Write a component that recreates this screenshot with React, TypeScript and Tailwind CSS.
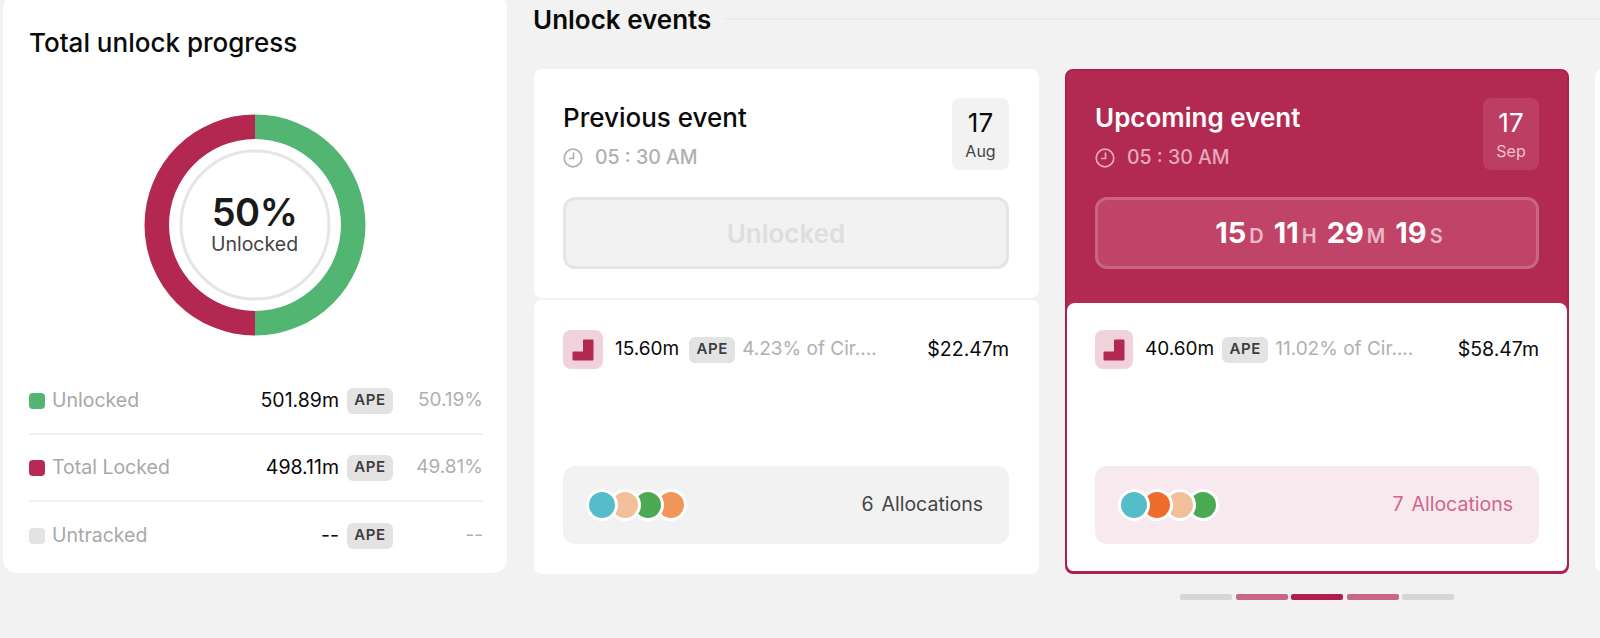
const avatarColors: Record<string, string> = {
  teal: 'bg-[#55bcc9]',
  peach: 'bg-[#f2bf9b]',
  green: 'bg-[#4caa55]',
  orange: 'bg-[#f2975c]',
  deep: 'bg-[#ef6c2c]',
}

function ApeChip() {
  return (
    <span className="flex h-[26px] w-[46px] shrink-0 items-center justify-center rounded-md bg-[#e3e3e3] text-[15px] font-semibold tracking-[0.6px] text-[#3d3d3d]">
      APE
    </span>
  )
}

function LegendRow({ swatch, label, value, pct, border }: { swatch: string; label: string; value: string; pct: string; border?: boolean }) {
  return (
    <div className={`flex h-[67px] items-center ${border ? 'border-b-2 border-[#f2f2f2]' : ''}`}>
      <span className={`h-4 w-4 shrink-0 rounded-[4px] ${swatch}`} />
      <span className="ml-[7px] text-[19.5px] text-[#a8a8a8]">{label}</span>
      <span className="ml-auto text-[19.5px] text-[#0a0a0a]">{value}</span>
      <span className="ml-2"><ApeChip /></span>
      <span className="w-[90px] text-right text-[19px] text-[#b0b0b0]">{pct}</span>
    </div>
  )
}

function Donut() {
  return (
    <svg width="222" height="222" viewBox="0 0 222 222">
      <path d="M111 0.5 A110.500 110.500 0 0 1 111 221.500 L111 197 A86 86 0 0 0 111 25 Z" fill="#52b572" />
      <path d="M111 0.5 A110.500 110.500 0 0 0 111 221.500 L111 197 A86 86 0 0 1 111 25 Z" fill="#b22851" />
      <circle cx="111" cy="111" r="74" fill="none" stroke="#e5e5e5" strokeWidth="3" />
    </svg>
  )
}

function ClockIcon({ className }: { className: string }) {
  return (
    <svg viewBox="0 0 20 20" fill="none" stroke="currentColor" strokeWidth="1.7" className={className}>
      <circle cx="10" cy="10" r="8.8" />
      <path d="M10.500 4.500v6H6" />
    </svg>
  )
}

function StepIcon({ width }: { width: string }) {
  return (
    <span className={`flex h-[39px] shrink-0 items-center justify-center rounded-lg bg-[#f0d2dd] ${width}`}>
      <svg width="22" height="22" viewBox="0 0 22 22">
        <path d="M11 1.500a1 1 0 0 1 1-1h8.500a1 1 0 0 1 1 1v19a1 1 0 0 1-1 1H1.500a1 1 0 0 1-1-1v-7a1 1 0 0 1 1-1H11z" fill="#b22851" />
      </svg>
    </span>
  )
}

function Avatars({ colors }: { colors: string[] }) {
  return (
    <div className="flex">
      {colors.map((c, i) => (
        <span key={i} className={`-ml-[9px] h-8 w-8 rounded-full border-[3px] border-white first:ml-0 ${avatarColors[c]}`} style={{ zIndex: colors.length - i }} />
      ))}
    </div>
  )
}

function TokenRow({ amount, pct, usd, iconWidth, chipGap }: { amount: string; pct: string; usd: string; iconWidth: string; chipGap: string }) {
  return (
    <div className="flex items-center">
      <StepIcon width={iconWidth} />
      <span className="ml-3 text-[19px] text-[#0a0a0a]">{amount}</span>
      <span className={chipGap}><ApeChip /></span>
      <span className="ml-[7px] text-[19px] whitespace-nowrap text-[#b0b0b0]">{pct}</span>
      <span className="ml-auto text-[19.5px] text-[#0a0a0a]">{usd}</span>
    </div>
  )
}

export default function App() {
  return (
    <div className="flex h-[638px] w-[1600px] items-start overflow-hidden bg-[#f2f2f2] pl-[3px] font-['Inter',sans-serif]">
      {/* Progress card */}
      <div className="-mt-[6px] h-[579px] w-[504px] shrink-0 rounded-[14px] bg-white pt-[31px] pr-[24px] pl-[26px]">
        <h2 className="text-[26px] leading-[36px] font-medium text-[#0a0a0a]">Total unlock progress</h2>
        <div className="relative mt-[53px] flex justify-center pr-[3px]">
          <Donut />
          <div className="absolute inset-0 flex flex-col items-center justify-center pr-[3px] pb-1">
            <span className="text-[38px] leading-[42px] font-semibold tracking-[-0.5px] text-[#1a1a1a]">50%</span>
            <span className="text-[19.5px] leading-[22px] text-[#444]">Unlocked</span>
          </div>
        </div>
        <div className="mt-[32px]">
          <LegendRow swatch="bg-[#52b572]" label="Unlocked" value="501.89m" pct="50.19%" border />
          <LegendRow swatch="bg-[#b82a55]" label="Total Locked" value="498.11m" pct="49.81%" border />
          <LegendRow swatch="bg-[#e3e3e3]" label="Untracked" value="--" pct="--" />
        </div>
      </div>

      {/* Unlock events */}
      <div className="ml-[26px] min-w-0 flex-1">
        <div className="flex h-[38px] items-center">
          <h2 className="text-[26px] font-semibold text-[#0a0a0a]">Unlock events</h2>
          <div className="ml-[14px] h-[2px] flex-1 bg-[#ebebeb]" />
        </div>

        <div className="mt-[31px] flex items-start gap-[26px] overflow-hidden pl-[1px]">
          {/* Previous */}
          <div className="w-[505px] shrink-0">
            <div className="h-[229px] rounded-lg bg-white px-[29px] pt-[29px] pr-[30px]">
              <div className="flex justify-between">
                <div>
                  <h3 className="text-[26px] leading-[40px] font-medium text-[#0a0a0a]">Previous event</h3>
                  <div className="mt-[5px] flex items-center text-[19.5px] font-medium text-[#b0b0b0]">
                    <ClockIcon className="h-5 w-5" />
                    <span className="ml-[12px]">05 : 30 AM</span>
                  </div>
                </div>
                <div className="flex h-[72px] w-[57px] flex-col items-center justify-center rounded-lg bg-[#f2f2f2]">
                  <span className="text-[26px] leading-[34px] text-[#0a0a0a]">17</span>
                  <span className="text-[16px] leading-[22px] text-[#444]">Aug</span>
                </div>
              </div>
              <div className="mt-[25px] flex h-[72px] items-center justify-center rounded-xl border-[3px] border-[#e5e5e5] bg-[#f2f2f2] text-[26px] font-semibold text-[#dedede]">
                Unlocked
              </div>
            </div>
            <div className="mt-[2px] flex h-[274px] flex-col rounded-lg bg-white px-[29px] pt-[30px] pr-[30px] pb-[30px]">
              <TokenRow amount="15.60m" pct="4.23% of Cir...." usd="$22.47m" iconWidth="w-[40px]" chipGap="ml-[10px]" />
              <div className="mt-auto flex h-[78px] items-center justify-between rounded-xl bg-[#f2f2f2] pr-[26px] pl-[23px]">
                <Avatars colors={['teal', 'peach', 'green', 'orange']} />
                <span className="text-[19.5px] text-[#444] [word-spacing:2.500px]">6 Allocations</span>
              </div>
            </div>
          </div>

          {/* Upcoming */}
          <div className="h-[505px] w-[504px] shrink-0 overflow-hidden rounded-lg border-2 border-b-[3px] border-[#b01e4c] bg-[#b22a52]">
            <div className="h-[232px] px-[28px] pt-[27px]">
              <div className="flex justify-between">
                <div>
                  <h3 className="text-[26px] leading-[40px] font-semibold text-white">Upcoming event</h3>
                  <div className="mt-[5px] flex items-center text-[19.5px] font-medium text-[#e5a9bb]">
                    <ClockIcon className="h-5 w-5" />
                    <span className="ml-[12px]">05 : 30 AM</span>
                  </div>
                </div>
                <div className="flex h-[72px] w-[56px] flex-col items-center justify-center rounded-lg bg-[#bc3e63]">
                  <span className="text-[26px] leading-[34px] text-white">17</span>
                  <span className="text-[16px] leading-[22px] text-[#ecc0cd]">Sep</span>
                </div>
              </div>
              <div className="mt-[25px] flex h-[72px] items-center justify-center gap-[10px] rounded-xl border-[3px] border-[#c86582] bg-[#c04467] pb-[2px] pl-[24px] font-bold text-white">
                {[['15', 'D'], ['11', 'H'], ['29', 'M'], ['19', 'S']].map(([n, u]) => (
                  <span key={u} className="flex items-baseline gap-[3px]">
                    <span className="text-[29px]">{n}</span>
                    <span className="text-[20px] font-semibold text-[#eab9c8]">{u}</span>
                  </span>
                ))}
              </div>
            </div>
            <div className="flex h-[269px] flex-col rounded-lg bg-white px-[28px] pt-[27px] pb-[28px]">
              <TokenRow amount="40.60m" pct="11.02% of Cir...." usd="$58.47m" iconWidth="w-[38px]" chipGap="ml-2" />
              <div className="mt-auto flex h-[78px] items-center justify-between rounded-xl bg-[#f7e9ee] pr-[26px] pl-[23px]">
                <Avatars colors={['teal', 'deep', 'peach', 'green']} />
                <span className="text-[19.5px] text-[#cf668a] [word-spacing:2.500px]">7 Allocations</span>
              </div>
            </div>
          </div>

          {/* Next card, cut off by the page edge */}
          <div className="h-[503px] w-[504px] shrink-0 rounded-lg bg-white" />
        </div>

        {/* Pager */}
        <div className="mt-[20px] flex justify-center gap-[3.5px] pl-[501px]">
          <span className="h-[6px] w-[52px] rounded-[2px] bg-[#d6d6d6]" />
          <span className="h-[6px] w-[52px] rounded-[2px] bg-[#c76685]" />
          <span className="h-[6px] w-[52px] rounded-[2px] bg-[#b01e4c]" />
          <span className="h-[6px] w-[52px] rounded-[2px] bg-[#c76685]" />
          <span className="h-[6px] w-[52px] rounded-[2px] bg-[#d6d6d6]" />
        </div>
      </div>
    </div>
  )
}
